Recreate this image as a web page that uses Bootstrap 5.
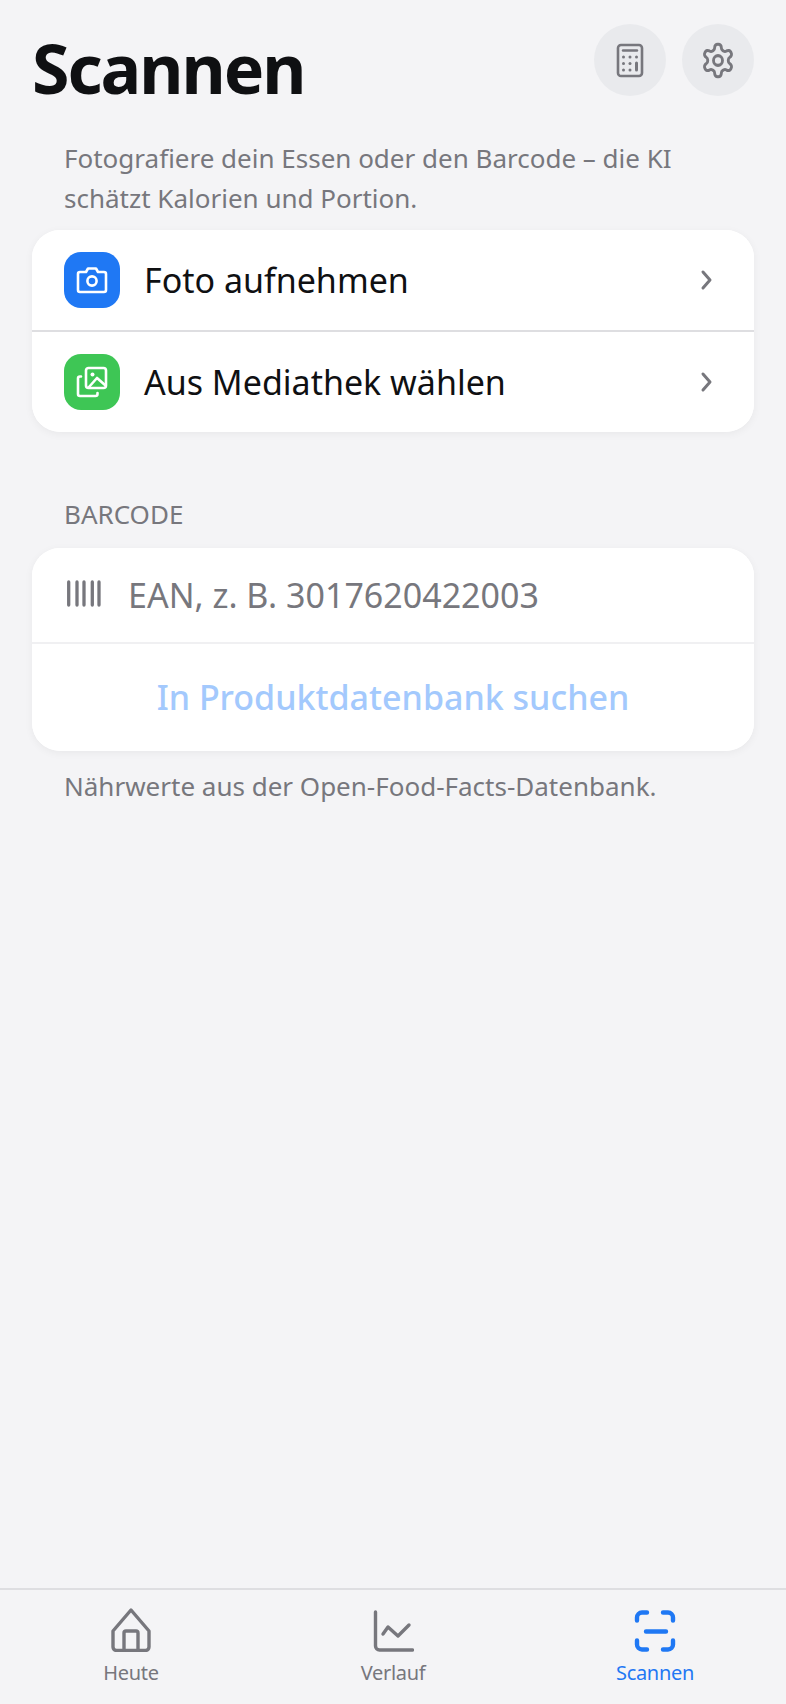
<!DOCTYPE html>
<html lang="de">
<head>
<meta charset="utf-8">
<title>Scannen</title>
<link rel="stylesheet" href="https://cdn.jsdelivr.net/npm/bootstrap@5.3.0/dist/css/bootstrap.min.css">
<style>
html,body{height:100%}
body{background:#f4f4f6;font-family:"Noto Sans",sans-serif;color:#0f1012}
.app-shell{height:1704px}
.head-row{padding:24px 32px 0}
.page-title{font-size:68px;font-weight:700;letter-spacing:-2px;line-height:92px;margin:-2px 0 0;}
.round-btn{width:72px;height:72px;border-radius:50%;background:#e9eaed;border:0;padding:0;color:#77777d}
.intro{font-size:26px;line-height:40px;color:#77777d;margin:24px 64px 12px;}
.sheet{background:#fff;border:0;border-radius:28px;margin:0 32px;box-shadow:0 2px 8px rgba(0,0,0,.05);overflow:hidden}
.sheet .list-group-item{border:0;padding:0;border-radius:0}
.sheet .pick-row{height:100px;padding:0 32px;font-size:34px;color:#0f1012;background:#fff}
.sheet .pick-row + .pick-row{border-top:2px solid #dedee1;height:102px}
.tile{width:56px;height:56px;border-radius:17px;margin-right:24px}
.tile-blue{background:#1f78f4}
.tile-green{background:#3ec655}
.chev{margin-left:auto;margin-right:8px}
.sec-label{font-size:26px;line-height:32px;color:#77777d;margin:0 64px 18px;padding-top:66px}
.sheet .ean-row{height:96px;padding:0 32px;font-size:34px;color:#77777d;border-bottom:2px solid #f0f0f2}
.bar-ico{margin:0 26px 3px 0}
.search-btn{height:107px;font-size:34px;font-weight:500;color:#a3c9fd;background:#fff;border:0;border-radius:0;width:100%;padding:0}
.search-btn:disabled{color:#a3c9fd;opacity:1}
.foot-note{font-size:26px;line-height:36px;color:#77777d;margin:17px 64px 0}
.tabbar{height:116px;border-top:2px solid #dedee1;background:#f4f4f6}
.tab-item{color:#77777d;font-size:20px;line-height:28px;letter-spacing:-.3px;text-decoration:none;padding-top:18px}
.tab-item svg{display:block;margin-bottom:7px}
.tab-item.is-on{color:#1f78f4}
</style>
</head>
<body>
<div class="app-shell d-flex flex-column">
  <main class="flex-grow-1">
    <div class="head-row d-flex justify-content-between align-items-start">
      <h1 class="page-title">Scannen</h1>
      <div class="d-flex gap-3">
        <button class="round-btn d-flex align-items-center justify-content-center" aria-label="Rechner">
          <svg width="28" height="35" viewBox="0 0 28 35" fill="none" stroke="currentColor" stroke-width="2.6" stroke-linecap="round">
            <rect x="2" y="2" width="24" height="31" rx="3"/>
            <path d="M7 7.500h14" stroke-width="2.4"/>
            <g fill="currentColor" stroke="none"><circle cx="7.500" cy="14" r="1.500"/><circle cx="14" cy="14" r="1.500"/><circle cx="20.500" cy="14" r="1.500"/><circle cx="7.500" cy="20.500" r="1.500"/><circle cx="14" cy="20.500" r="1.500"/><circle cx="7.500" cy="27" r="1.500"/><circle cx="14" cy="27" r="1.500"/></g>
            <path d="M20.500 20v7" stroke-width="3"/>
          </svg>
        </button>
        <button class="round-btn d-flex align-items-center justify-content-center" aria-label="Einstellungen">
          <svg width="36" height="39" viewBox="0 0 24 24" fill="none" stroke="currentColor" stroke-width="1.9" stroke-linejoin="round" preserveAspectRatio="none">
            <path d="M12.220 2h-.44a2 2 0 0 0-2 2v.18a2 2 0 0 1-1 1.730l-.43.25a2 2 0 0 1-2 0l-.15-.08a2 2 0 0 0-2.730.73l-.22.38a2 2 0 0 0 .73 2.730l.15.1a2 2 0 0 1 1 1.720v.51a2 2 0 0 1-1 1.740l-.15.09a2 2 0 0 0-.73 2.730l.22.38a2 2 0 0 0 2.730.73l.15-.08a2 2 0 0 1 2 0l.43.25a2 2 0 0 1 1 1.730V20a2 2 0 0 0 2 2h.44a2 2 0 0 0 2-2v-.18a2 2 0 0 1 1-1.730l.43-.25a2 2 0 0 1 2 0l.15.08a2 2 0 0 0 2.730-.73l.22-.39a2 2 0 0 0-.73-2.730l-.15-.08a2 2 0 0 1-1-1.740v-.5a2 2 0 0 1 1-1.740l.15-.09a2 2 0 0 0 .73-2.730l-.22-.38a2 2 0 0 0-2.730-.73l-.15.08a2 2 0 0 1-2 0l-.43-.25a2 2 0 0 1-1-1.730V4a2 2 0 0 0-2-2z"/>
            <circle cx="12" cy="12" r="3"/>
          </svg>
        </button>
      </div>
    </div>
    <p class="intro">Fotografiere dein Essen oder den Barcode – die KI schätzt Kalorien und Portion.</p>
    <div class="list-group sheet">
      <a href="#" class="list-group-item pick-row d-flex align-items-center text-decoration-none">
        <span class="tile tile-blue d-flex align-items-center justify-content-center">
          <svg width="32" height="28" viewBox="0 0 32 28" fill="none" stroke="#fff" stroke-width="2.600" stroke-linejoin="round">
            <path d="M4 6h6l2-3.500h8L22 6h6a2 2 0 0 1 2 2v16a2 2 0 0 1-2 2H4a2 2 0 0 1-2-2V8a2 2 0 0 1 2-2z"/>
            <circle cx="16" cy="15" r="4.600"/>
          </svg>
        </span>
        Foto aufnehmen
        <svg class="chev" width="14" height="22" viewBox="0 0 14 22" fill="none" stroke="#77777d" stroke-width="3" stroke-linecap="round" stroke-linejoin="round"><path d="M3 3l7 8-7 8"/></svg>
      </a>
      <a href="#" class="list-group-item pick-row d-flex align-items-center text-decoration-none">
        <span class="tile tile-green d-flex align-items-center justify-content-center">
          <svg width="32" height="32" viewBox="0 0 32 32" fill="none" stroke="#fff" stroke-width="2.600" stroke-linecap="round" stroke-linejoin="round">
            <rect x="10" y="2" width="20" height="20" rx="2.500"/>
            <circle cx="16.500" cy="8.500" r="2" fill="#fff" stroke="none"/>
            <path d="M13 21l8-9 8 7"/>
            <path d="M5 10.500H4a2 2 0 0 0-2 2V28a2 2 0 0 0 2 2h15.500a2 2 0 0 0 2-2v-1"/>
          </svg>
        </span>
        Aus Mediathek wählen
        <svg class="chev" width="14" height="22" viewBox="0 0 14 22" fill="none" stroke="#77777d" stroke-width="3" stroke-linecap="round" stroke-linejoin="round"><path d="M3 3l7 8-7 8"/></svg>
      </a>
    </div>
    <div class="sec-label">BARCODE</div>
    <div class="list-group sheet">
      <div class="list-group-item ean-row d-flex align-items-center">
        <svg class="bar-ico" width="38" height="27" viewBox="0 0 38 27" fill="none" stroke="#77777d" stroke-width="3.300" stroke-linecap="round"><path d="M4.700 2v23M13 2v23M20 2v23M28.300 2v23M35 2v23"/></svg>
        EAN, z. B. 3017620422003
      </div>
      <button class="search-btn" disabled>In Produktdatenbank suchen</button>
    </div>
    <p class="foot-note">Nährwerte aus der Open-Food-Facts-Datenbank.</p>
  </main>
  <nav class="tabbar d-flex">
    <a href="#" class="tab-item flex-fill w-100 d-flex flex-column align-items-center">
      <svg width="42" height="44" viewBox="0 0 42 44" fill="none" stroke="currentColor" stroke-width="3.400" stroke-linejoin="round" stroke-linecap="round">
        <path d="M21 2L39 23v16a3.500 3.500 0 0 1-3.500 3.500h-29A3.500 3.500 0 0 1 3 39V23z"/>
        <path d="M14 42V25a2 2 0 0 1 2-2h10a2 2 0 0 1 2 2v17"/>
      </svg>
      Heute
    </a>
    <a href="#" class="tab-item flex-fill w-100 d-flex flex-column align-items-center">
      <svg width="42" height="44" viewBox="0 0 42 44" fill="none" stroke="currentColor" stroke-width="3.400" stroke-linejoin="round" stroke-linecap="round">
        <path d="M3.500 4v34a4 4 0 0 0 4 4h33"/>
        <path d="M11 26l5-7 10 9 11-11"/>
      </svg>
      Verlauf
    </a>
    <a href="#" class="tab-item is-on flex-fill w-100 d-flex flex-column align-items-center">
      <svg width="42" height="44" viewBox="0 0 42 44" fill="none" stroke="currentColor" stroke-width="4.400" stroke-linecap="round" stroke-linejoin="round">
        <path transform="translate(0 1.500)" d="M3 11V8a5 5 0 0 1 5-5h5M29 3h5a5 5 0 0 1 5 5v3M39 31v4a5 5 0 0 1-5 5h-5M13 40H8a5 5 0 0 1-5-5v-4M12 22h20"/>
      </svg>
      Scannen
    </a>
  </nav>
</div>
<script src="https://cdn.jsdelivr.net/npm/bootstrap@5.3.0/dist/js/bootstrap.bundle.min.js"></script>
</body>
</html>
